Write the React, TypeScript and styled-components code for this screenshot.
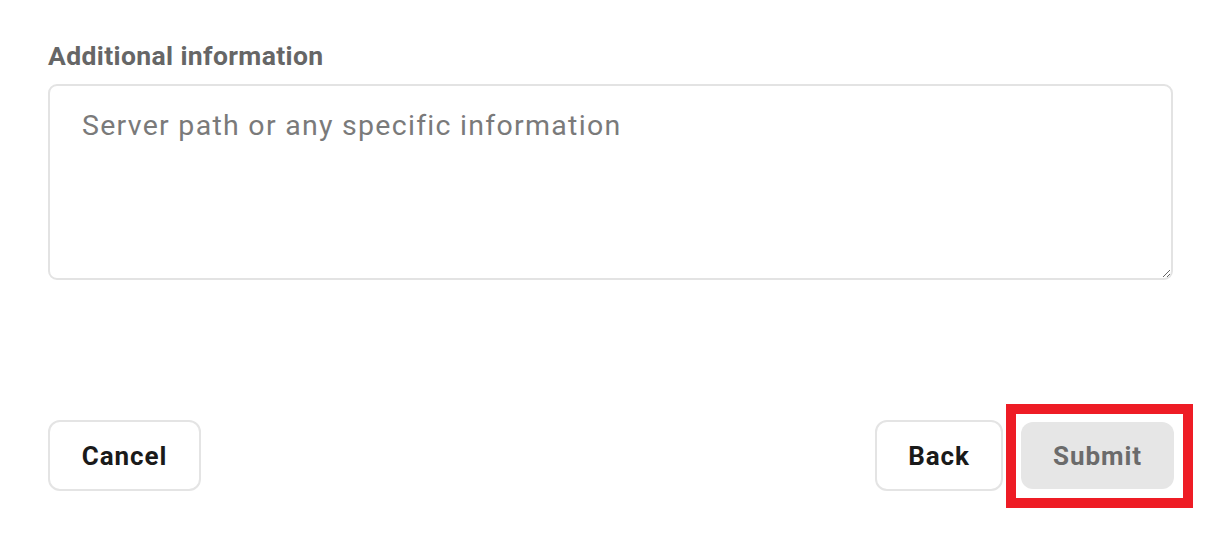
import React from "react";
import styled, { createGlobalStyle } from "styled-components";

const Global = createGlobalStyle`
  html, body { margin: 0; padding: 0; background: #ffffff; }
  body { font-family: Roboto, "Liberation Sans", Arial, sans-serif; }
  * { box-sizing: border-box; }
`;

const Page = styled.div`
  width: 1220px;
  height: 537px;
  padding: 40px 47px 0 48px;
  display: flex;
  flex-direction: column;
`;

const Label = styled.label`
  display: block;
  font-size: 26.5px;
  font-weight: 700;
  color: #666666;
  line-height: 32px;
  letter-spacing: 0.38px;
  margin-bottom: 12px;
`;

const TextArea = styled.textarea`
  display: block;
  width: 1125px;
  height: 196px;
  border: 2px solid #e3e3e3;
  border-radius: 9px;
  padding: 22px 32px;
  font-family: Roboto, "Liberation Sans", Arial, sans-serif;
  font-size: 28.5px;
  line-height: 36px;
  letter-spacing: 1.28px;
  color: #222;
  resize: vertical;
  outline: none;
  &::placeholder { color: #7a7a7a; }
`;

const Actions = styled.div`
  display: flex;
  justify-content: space-between;
  align-items: center;
  margin-top: 140px;
  width: 1126px;
`;

const Group = styled.div`
  display: flex;
  align-items: center;
  gap: 18px;
`;

const Button = styled.button<{ $variant?: "outline" | "disabled" }>`
  height: ${(p) => (p.$variant === "disabled" ? "67px" : "71px")};
  padding: 0;
  border-radius: 12px;
  font-family: Roboto, "Liberation Sans", Arial, sans-serif;
  font-size: 26px;
  font-weight: 700;
  letter-spacing: 0.9px;
  cursor: pointer;
  border: ${(p) => (p.$variant === "disabled" ? "none" : "2px solid #e4e4e4")};
  background: ${(p) => (p.$variant === "disabled" ? "#e6e6e6" : "#ffffff")};
  color: ${(p) => (p.$variant === "disabled" ? "#6b6b6b" : "#1a1a1a")};
  position: relative;
`;

const Highlight = styled.span`
  position: absolute;
  left: -15px;
  top: -18px;
  right: -19px;
  bottom: -19px;
  border: 10px solid #ee1c25;
  pointer-events: none;
`;

export default function App() {
  return (
    <>
      <Global />
      <Page>
        <Label htmlFor="info">Additional information</Label>
        <TextArea id="info" placeholder="Server path or any specific information" />
        <Actions>
          <Button $variant="outline" style={{ width: 153 }}>Cancel</Button>
          <Group>
            <Button $variant="outline" style={{ width: 128 }}>Back</Button>
            <Button $variant="disabled" disabled style={{ width: 153 }}>
              Submit
              <Highlight />
            </Button>
          </Group>
        </Actions>
      </Page>
    </>
  );
}
